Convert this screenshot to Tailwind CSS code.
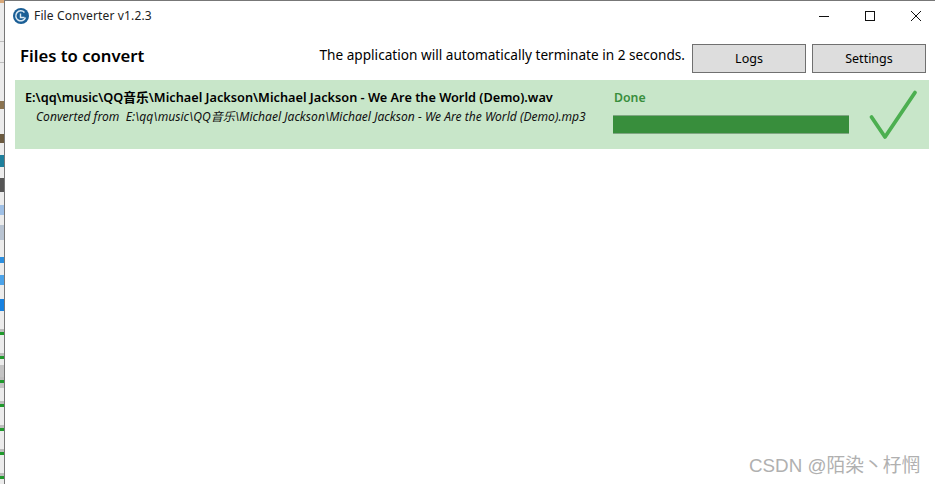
<!DOCTYPE html>
<html lang="en">
<head>
    <meta charset="UTF-8">
    <meta name="viewport" content="width=device-width, initial-scale=1.0">
    <title>File Converter v1.2.3</title>
    <script src="https://cdn.jsdelivr.net/npm/@tailwindcss/browser@4"></script>
</head>
<body class="bg-white overflow-hidden font-['Noto_Sans','Noto_Sans_CJK_SC',sans-serif] text-black">
    <div class="flex w-[935px] h-[484px] relative">
        <!-- bit of desktop showing on the left -->
        <div class="w-[4px] shrink-0 bg-[#ececec] flex flex-col">
            <div class="h-[3px] bg-[#d9a878]"></div>
            <div class="h-[38px]"></div>
            <div class="h-[1px] bg-[#bdbdbd]"></div>
            <div class="h-[20px]"></div>
            <div class="h-[1px] bg-[#bdbdbd]"></div>
            <div class="h-[38px]"></div>
            <div class="h-[8px] bg-[#8a7350]"></div>
            <div class="h-[25px]"></div>
            <div class="h-[9px] bg-[#6b5a40]"></div>
            <div class="h-[12px]"></div>
            <div class="h-[12px] bg-[#1d7f9c]"></div>
            <div class="h-[11px]"></div>
            <div class="h-[14px] bg-[#555]"></div>
            <div class="h-[13px]"></div>
            <div class="h-[10px] bg-[#9fc0e6]"></div>
            <div class="h-[10px]"></div>
            <div class="h-[15px] bg-[#b9c4d2]"></div>
            <div class="h-[17px]"></div>
            <div class="h-[6px] bg-[#2b8fe0]"></div>
            <div class="h-[12px]"></div>
            <div class="h-[10px] bg-[#4ba3ea]"></div>
            <div class="h-[14px]"></div>
            <div class="h-[12px] bg-[#1681e0]"></div>
            <div class="h-[18px]"></div>
            <div class="h-[3px] bg-[#bdbdbd]"></div>
            <div class="h-[3px] bg-[#1f9a2c]"></div>
            <div class="h-[18px]"></div>
            <div class="h-[3px] bg-[#bdbdbd]"></div>
            <div class="h-[3px] bg-[#1f9a2c]"></div>
            <div class="h-[6px]"></div>
            <div class="h-[12px] bg-[#c4c4c4]"></div>
            <div class="h-[3px] bg-[#bdbdbd]"></div>
            <div class="h-[3px] bg-[#1f9a2c]"></div>
            <div class="h-[5px] bg-[#c4c4c4]"></div>
            <div class="h-[13px]"></div>
            <div class="h-[3px] bg-[#bdbdbd]"></div>
            <div class="h-[3px] bg-[#1f9a2c]"></div>
            <div class="h-[18px]"></div>
            <div class="h-[3px] bg-[#bdbdbd]"></div>
            <div class="h-[3px] bg-[#1f9a2c]"></div>
            <div class="h-[18px]"></div>
            <div class="h-[3px] bg-[#bdbdbd]"></div>
            <div class="h-[3px] bg-[#1f9a2c]"></div>
            <div class="h-[18px]"></div>
            <div class="h-[3px] bg-[#bdbdbd]"></div>
            <div class="h-[3px] bg-[#1f9a2c]"></div>
        </div>

        <div class="flex-1 flex flex-col border-l border-[#777] border-t">
            <!-- title bar -->
            <div class="h-[29px] flex items-center pl-[8px] shrink-0">
                <svg width="16" height="16" viewBox="0 0 16 16" class="mr-[5px]">
                    <circle cx="8" cy="8" r="8" fill="#1b5f96"/>
                    <path d="M12.500 9.500A5 5 0 1 1 11.500 4.500" fill="none" stroke="#dbe9f3" stroke-width="1.500"/>
                    <path d="M7.500 5.500v4h4" fill="none" stroke="#dbe9f3" stroke-width="1.400"/>
                </svg>
                <span class="text-[12px] tracking-[0.15px] text-[#222]">File Converter v1.2.3</span>
                <div class="ml-auto flex items-center text-black">
                    <svg width="12" height="12" viewBox="0 0 12 12" class="mr-[34px]"><path d="M1 6.500h10" stroke="#111" stroke-width="1"/></svg>
                    <svg width="12" height="12" viewBox="0 0 12 12" class="mr-[34px]"><rect x="1.500" y="1.500" width="9" height="9" fill="none" stroke="#111" stroke-width="1"/></svg>
                    <svg width="12" height="12" viewBox="0 0 12 12" class="mr-[13px]"><path d="M1 1l10 10M11 1L1 11" stroke="#111" stroke-width="1"/></svg>
                </div>
            </div>

            <!-- header -->
            <div class="h-[29px] flex items-center pl-[15px] shrink-0 mt-[14px]">
                <h1 class="text-[16.700px] font-semibold mb-[5px]">Files to convert</h1>
                <p class="ml-auto text-[13.630px] mr-[7px] mb-[7px]">The application will automatically terminate in 2 seconds.</p>
                <button class="w-[114px] h-[29px] pt-[2px] bg-[#dddddd] border border-[#707070] text-[12.500px] mr-[6px]">Logs</button>
                <button class="w-[114px] h-[29px] pt-[2px] bg-[#dddddd] border border-[#707070] text-[12.500px] mr-[9px]">Settings</button>
            </div>

            <!-- file row -->
            <div class="ml-[10px] mr-[6px] mt-[7px] h-[69px] bg-[#c8e6c9] flex shrink-0">
                <div class="w-[598px] pl-[10px] pt-[8px]">
                    <p class="text-[12.720px] font-semibold leading-[18px] whitespace-nowrap">E:\qq\music\QQ音乐\Michael Jackson\Michael Jackson - We Are the World (Demo).wav</p>
                    <p class="text-[12.100px] italic leading-[16px] mt-[3px] pl-[11px] whitespace-nowrap text-[#111]">Converted from&nbsp; E:\qq\music\QQ音乐\Michael Jackson\Michael Jackson - We Are the World (Demo).mp3</p>
                </div>
                <div class="w-[236px] pt-[9px]">
                    <p class="text-[12.300px] font-semibold leading-[18px] pl-[1px] text-[#388e3c]">Done</p>
                    <div class="mt-[8px] h-[19px] bg-[#388e3c] border-y border-[#7fa582]"></div>
                </div>
                <svg width="80" height="69" viewBox="0 0 80 69" class="shrink-0">
                    <path d="M22.500 37L36 57L66 12.500" fill="none" stroke="#4caf50" stroke-width="3.800" stroke-linecap="round" stroke-linejoin="round"/>
                </svg>
            </div>
        </div>

        <!-- watermark -->
        <span class="absolute left-[749px] top-[452px] text-[18.800px] text-[#b0b0b0] font-['Liberation_Sans','Noto_Sans_CJK_SC',sans-serif] whitespace-nowrap">CSDN @陌染丶杍惘</span>
    </div>
</body>
</html>
